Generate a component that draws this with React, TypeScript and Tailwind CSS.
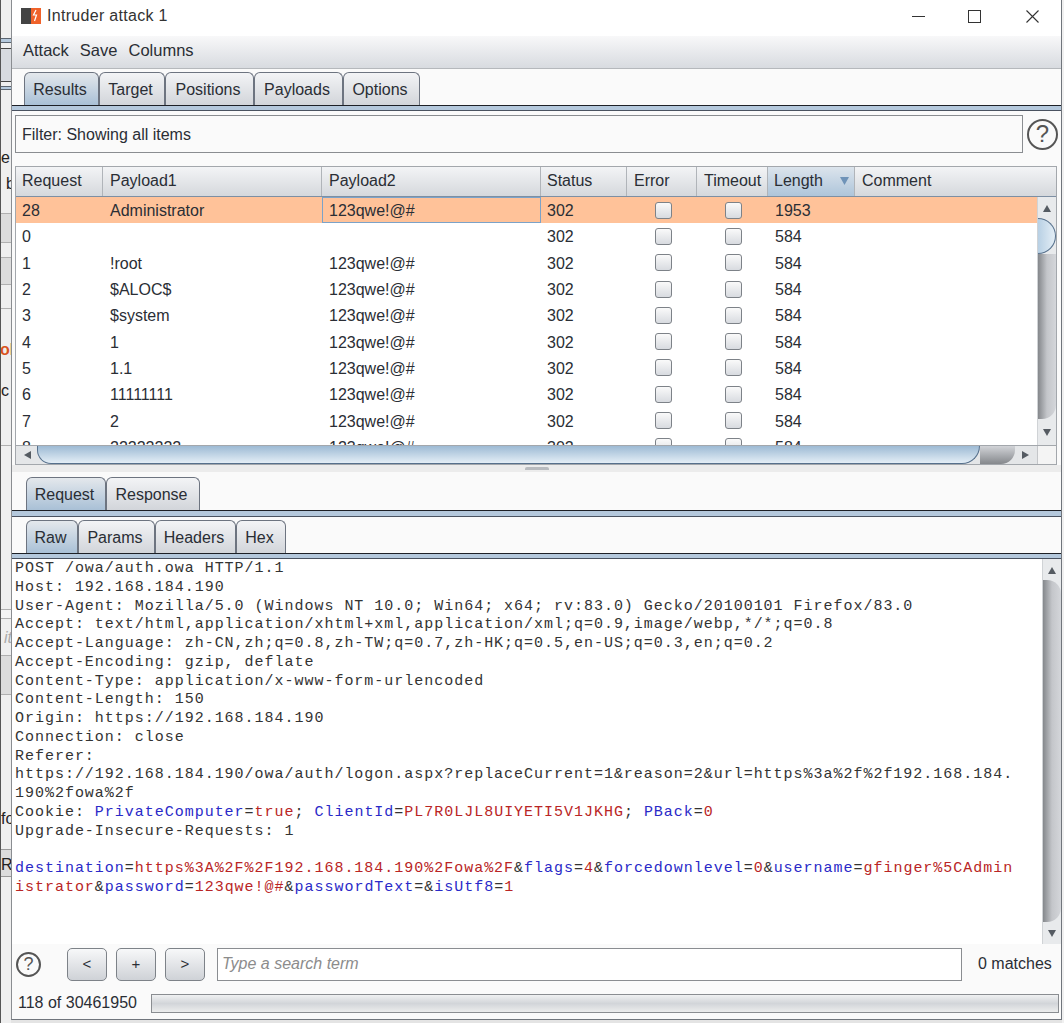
const requests = [
  { id: "0", p1: "", p2: "", len: "584" },
  { id: "1", p1: "!root", p2: "123qwe!@#", len: "584" },
  { id: "2", p1: "$ALOC$", p2: "123qwe!@#", len: "584" },
  { id: "3", p1: "$system", p2: "123qwe!@#", len: "584" },
  { id: "4", p1: "1", p2: "123qwe!@#", len: "584" },
  { id: "5", p1: "1.1", p2: "123qwe!@#", len: "584" },
  { id: "6", p1: "11111111", p2: "123qwe!@#", len: "584" },
  { id: "7", p1: "2", p2: "123qwe!@#", len: "584" },
  { id: "8", p1: "22222222", p2: "123qwe!@#", len: "584" },
];

const headers = [
  { label: "Request", cls: "w-[87px] pl-[6px]" },
  { label: "Payload1", cls: "w-[219px] pl-[7px]" },
  { label: "Payload2", cls: "w-[219px] pl-[7px]" },
  { label: "Status", cls: "w-[86px] pl-[6px]" },
  { label: "Error", cls: "w-[70px] pl-[7px]" },
  { label: "Timeout", cls: "w-[71px] pl-[7px]" },
];

function Tab({ label, width, active }: { label: string; width: string; active?: boolean }) {
  return (
    <div
      className={`flex items-center justify-center rounded-t-[6px] border border-b-0 border-[#6d7480] h-[33px] pt-[1px] pr-[3px] ${width} ${
        active ? "bg-gradient-to-b from-[#e4e8ec] to-[#a9c0d6]" : "bg-gradient-to-b from-[#f3f4f6] to-[#d2d5da]"
      }`}
    >
      {label}
    </div>
  );
}

function Check() {
  return <div className="w-[17px] h-[17px] rounded-[3px] border border-[#7d8288] bg-gradient-to-b from-[#fafafa] to-[#d8dbe0]" />;
}

function Row({ r, selected }: { r: { id: string; p1: string; p2: string; len: string }; selected?: boolean }) {
  return (
    <div className={`flex items-center h-[26.3px] shrink-0 ${selected ? "bg-[#ffc299]" : "bg-white"}`}>
      <div className="w-[87px] pl-[6px] pt-[2px]">{r.id}</div>
      <div className="w-[219px] pl-[7px] pt-[2px]">{r.p1}</div>
      <div className={`w-[219px] pl-[6px] pt-[2px] h-full flex items-center border ${selected ? "border-[#7ba2c8]" : "border-transparent"}`}>{r.p2}</div>
      <div className="w-[86px] pl-[6px] pt-[2px]">302</div>
      <div className="w-[70px] flex justify-center pl-[2px]"><Check /></div>
      <div className="w-[71px] flex justify-center pl-[2px]"><Check /></div>
      <div className="w-[87px] pl-[7px] pt-[2px]">{r.len}</div>
    </div>
  );
}

function ArrowBtn({ dir }: { dir: "up" | "down" | "left" | "right" }) {
  const pts = { up: "1,9 5,2 9,9", down: "1,2 5,9 9,2", left: "9,1 2,5 9,9", right: "1,1 8,5 1,9" }[dir];
  return (
    <svg width="10" height="10" viewBox="0 0 10 10" className="shrink-0">
      <polygon points={pts} fill="#555b62" />
    </svg>
  );
}

function SearchBtn({ label }: { label: string }) {
  return (
    <div className="flex items-center justify-center w-[40px] h-[33px] rounded-[5px] border border-[#7d8288] bg-gradient-to-b from-[#f7f8f9] to-[#cfd2d7] text-[15px] mr-[9px]">
      {label}
    </div>
  );
}

function Blue({ children }: { children: string }) {
  return <span className="text-[#2a2ac8]">{children}</span>;
}

function Red({ children }: { children: string }) {
  return <span className="text-[#b92525]">{children}</span>;
}

export default function App() {
  return (
    <div className="w-[1064px] h-[1023px] flex bg-[#e4e4e4] overflow-hidden font-['Liberation_Sans',sans-serif] text-[16px] text-[#2a2e35]">
      {/* what is left of the window underneath */}
      <div className="relative w-[11px] h-full shrink-0 bg-[#efefef] border-l border-[#555] overflow-hidden text-[#222]">
        <div className="absolute left-0 right-0 top-[38px] h-[5px] border-y border-[#5b6570] bg-[#b4c8dc]" />
        <div className="absolute left-0 right-0 top-[48px] h-[34px] border-y border-[#444] bg-[#d8dbe0]" />
        <div className="absolute left-0 right-0 top-[86px] h-[4px] border-y border-[#5b6570] bg-[#b4c8dc]" />
        <div className="absolute left-0 right-0 top-[213px] h-[30px] border-y border-[#b0b0b0] bg-[#dcdcdc]" />
        <div className="absolute left-0 right-0 top-[257px] h-[28px] border-y border-[#b0b0b0] bg-[#dcdcdc]" />
        <div className="absolute left-0 right-0 top-[308px] h-[1px] bg-[#b0b0b0]" />
        <div className="absolute left-0 right-0 top-[445px] h-[1px] bg-[#b0b0b0]" />
        <div className="absolute left-0 right-0 top-[609px] h-[10px] border-y border-[#b0b0b0] bg-[#f4f4f4]" />
        <div className="absolute left-0 right-0 top-[655px] h-[40px] border-y border-[#b0b0b0] bg-[#dcdcdc]" />
        <div className="absolute left-0 right-0 top-[849px] h-[28px] border-y border-[#999] bg-[#dcdcdc]" />
        <span className="absolute left-0 top-[146px]">e</span>
        <span className="absolute left-[5px] top-[172px]">b</span>
        <span className="absolute left-[-1px] top-[338px] font-bold text-[#d9541e]">ol</span>
        <span className="absolute left-0 top-[379px]">c</span>
        <span className="absolute left-[3px] top-[626px] italic text-[#aaa]">it</span>
        <span className="absolute left-0 top-[807px]">fo</span>
        <span className="absolute left-0 top-[853px]">R</span>
      </div>

      <div className="w-[1051px] h-[1020px] shrink-0 flex flex-col bg-[#fafafa] border-r border-b border-l border-l-[#8a8d91] border-[#70757c]">
        {/* title bar */}
        <div className="h-[36px] shrink-0 bg-white flex items-center pl-[9px] pb-[4px]">
          <svg width="20" height="16" viewBox="0 0 20 16" className="shrink-0">
            <rect x="0" y="0" width="10" height="16" fill="#444" />
            <rect x="10" y="0" width="10" height="16" fill="#f0622a" />
            <path d="M15 2 L12.5 7 H15.5 L13.5 13" stroke="#fff" strokeWidth="1.2" fill="none" />
          </svg>
          <span className="ml-[6px] text-[#333] tracking-[0.3px]">Intruder attack 1</span>
          <div className="ml-auto flex items-center pr-[22px]">
            <div className="w-[13px] h-[1px] bg-[#333]" />
            <div className="ml-[43px] w-[13px] h-[13px] border border-[#333]" />
            <svg width="13" height="13" viewBox="0 0 13 13" className="ml-[45px]">
              <path d="M0.5 0.5 L12.5 12.5 M12.5 0.5 L0.5 12.5" stroke="#333" strokeWidth="1.1" />
            </svg>
          </div>
        </div>

        {/* menu */}
        <div className="h-[33px] shrink-0 flex items-center gap-[11px] pl-[11px] pb-[4px] bg-gradient-to-b from-[#f8f8f9] to-[#d8dbe0] border-b border-[#b5b8bc] text-[16.5px]">
          <span>Attack</span>
          <span>Save</span>
          <span>Columns</span>
        </div>

        {/* main tabs */}
        <div className="h-[37px] shrink-0 flex items-end pl-[12px] border-b border-[#1d2026]">
          <Tab label="Results" width="w-[75px]" active />
          <Tab label="Target" width="w-[66px]" />
          <Tab label="Positions" width="w-[89px]" />
          <Tab label="Payloads" width="w-[89px]" />
          <Tab label="Options" width="w-[77px]" />
        </div>
        <div className="h-[5px] shrink-0 bg-[#b4c8dc] border-b border-[#4a5260]" />

        {/* filter */}
        <div className="h-[38px] mt-[4px] shrink-0 flex items-center pl-[3px]">
          <div className="w-[1008px] h-full flex items-center pl-[6px] pt-[2px] border border-[#8a8d91] bg-[#fafafa]">Filter: Showing all items</div>
          <div className="ml-[4px] w-[31px] h-[31px] rounded-full border-2 border-[#555] flex items-center justify-center text-[24px] text-[#555]">?</div>
        </div>

        {/* results table */}
        <div className="mt-[13px] ml-[3px] w-[1042px] h-[299px] shrink-0 flex flex-col border border-[#a3a7ac] overflow-hidden">
          <div className="h-[30px] shrink-0 flex border-b border-[#7d8fa3] bg-gradient-to-b from-[#f3f4f6] to-[#d5d8dc]">
            {headers.map((h) => (
              <div key={h.label} className={`${h.cls} flex items-center pb-[2px] border-r border-[#b0b4b9]`}>{h.label}</div>
            ))}
            <div className="w-[87px] flex items-center justify-between pl-[6px] pr-[5px] pb-[2px] border-r border-[#b0b4b9] bg-gradient-to-b from-[#dce4ec] to-[#aec5da]">
              Length
              <svg width="9" height="8" viewBox="0 0 9 8"><polygon points="0,0 9,0 4.5,8" fill="#6f93b8" /></svg>
            </div>
            <div className="flex-1 flex items-center pl-[7px] pb-[2px]">Comment</div>
          </div>
          <div className="flex-1 flex min-h-0">
            <div className="flex-1 flex flex-col overflow-hidden">
              <Row r={{ id: "28", p1: "Administrator", p2: "123qwe!@#", len: "1953" }} selected />
              {requests.map((r) => (
                <Row key={r.id} r={r} />
              ))}
            </div>
            <div className="w-[19px] shrink-0 flex flex-col items-center bg-[#e8eaec] border-l border-[#d0d3d6]">
              <div className="h-[21px] shrink-0 flex items-center"><ArrowBtn dir="up" /></div>
              <div className="w-full h-[36px] shrink-0 rounded-r-[18px] border-r border-y border-[#56708c] bg-gradient-to-r from-[#b8d0e4] to-[#e4eef6]" />
              <div className="w-full flex-1 rounded-br-[14px] bg-gradient-to-r from-[#85888c] via-[#c4c6ca] to-[#d4d6da]" />
              <div className="h-[26px] shrink-0 flex items-center"><ArrowBtn dir="down" /></div>
            </div>
          </div>
          <div className="h-[19px] shrink-0 flex items-center bg-[#e4e6e8] border-t border-[#a3a7ac]">
            <div className="w-[21px] flex justify-center shrink-0"><ArrowBtn dir="left" /></div>
            <div className="w-[943px] h-full rounded-bl-[14px] rounded-br-[18px] border-b border-x border-[#56708c] bg-gradient-to-b from-[#9dbad4] to-[#e4eef6] shrink-0" />
            <div className="w-[35px] h-full rounded-br-[14px] bg-gradient-to-b from-[#d2d4d8] to-[#85888c] shrink-0" />
            <div className="w-[22px] flex justify-center shrink-0"><ArrowBtn dir="right" /></div>
            <div className="flex-1 h-full bg-[#f4f4f4] border-l border-[#c4c6c9]" />
          </div>
        </div>

        {/* divider */}
        <div className="h-[7px] shrink-0 flex justify-center items-center bg-[#ececec]">
          <div className="w-[24px] h-[3px] rounded-t-[2px] bg-[#b8bbbf]" />
        </div>

        {/* request / response tabs */}
        <div className="h-[39px] shrink-0 flex items-end pl-[14px] border-b border-[#1d2026]">
          <Tab label="Request" width="w-[80px]" active />
          <Tab label="Response" width="w-[94px]" />
        </div>
        <div className="h-[6px] shrink-0 bg-[#b4c8dc] border-b border-[#4a5260]" />

        <div className="h-[37px] shrink-0 flex items-end pl-[14px] border-b border-[#1d2026]">
          <Tab label="Raw" width="w-[52px]" active />
          <Tab label="Params" width="w-[77px]" />
          <Tab label="Headers" width="w-[81px]" />
          <Tab label="Hex" width="w-[50px]" />
        </div>
        <div className="h-[5px] shrink-0 bg-[#b4c8dc] border-b border-[#4a5260]" />

        {/* message editor */}
        <div className="h-[385px] shrink-0 flex bg-white">
          <div className="flex-1 pl-[3px] pt-[1px] whitespace-pre font-['Liberation_Mono',monospace] text-[15px] tracking-[0.98px] leading-[18.75px] text-[#333]">
            <div>POST /owa/auth.owa HTTP/1.1</div>
            <div>Host: 192.168.184.190</div>
            <div>User-Agent: Mozilla/5.0 (Windows NT 10.0; Win64; x64; rv:83.0) Gecko/20100101 Firefox/83.0</div>
            <div>Accept: text/html,application/xhtml+xml,application/xml;q=0.9,image/webp,*/*;q=0.8</div>
            <div>Accept-Language: zh-CN,zh;q=0.8,zh-TW;q=0.7,zh-HK;q=0.5,en-US;q=0.3,en;q=0.2</div>
            <div>Accept-Encoding: gzip, deflate</div>
            <div>Content-Type: application/x-www-form-urlencoded</div>
            <div>Content-Length: 150</div>
            <div>Origin: https://192.168.184.190</div>
            <div>Connection: close</div>
            <div>Referer:</div>
            <div>https://192.168.184.190/owa/auth/logon.aspx?replaceCurrent=1&amp;reason=2&amp;url=https%3a%2f%2f192.168.184.</div>
            <div>190%2fowa%2f</div>
            <div>
              Cookie: <Blue>PrivateComputer</Blue>=<Red>true</Red>; <Blue>ClientId</Blue>=<Red>PL7R0LJL8UIYETI5V1JKHG</Red>; <Blue>PBack</Blue>=<Red>0</Red>
            </div>
            <div>Upgrade-Insecure-Requests: 1</div>
            <div>&nbsp;</div>
            <div>
              <Blue>destination</Blue>=<Red>https%3A%2F%2F192.168.184.190%2Fowa%2F</Red>&amp;<Blue>flags</Blue>=<Red>4</Red>&amp;<Blue>forcedownlevel</Blue>=<Red>0</Red>&amp;<Blue>username</Blue>=<Red>gfinger%5CAdmin</Red>
            </div>
            <div>
              <Red>istrator</Red>&amp;<Blue>password</Blue>=<Red>123qwe!@#</Red>&amp;<Blue>passwordText</Blue>=&amp;<Blue>isUtf8</Blue>=<Red>1</Red>
            </div>
          </div>
          <div className="w-[19px] shrink-0 flex flex-col items-center bg-[#e8eaec] border-l border-[#d0d3d6]">
            <div className="h-[21px] shrink-0 flex items-center"><ArrowBtn dir="up" /></div>
            <div className="w-full flex-1 rounded-tr-[14px] rounded-br-[14px] bg-gradient-to-r from-[#85888c] via-[#c4c6ca] to-[#d4d6da]" />
            <div className="h-[22px] shrink-0 flex items-center"><ArrowBtn dir="down" /></div>
          </div>
        </div>

        {/* search */}
        <div className="h-[40px] shrink-0 flex items-center pl-[4px]">
          <div className="w-[25px] h-[25px] rounded-full border-2 border-[#555] flex items-center justify-center text-[18px] text-[#555]">?</div>
          <div className="ml-[26px] flex"><SearchBtn label="<" /><SearchBtn label="+" /><SearchBtn label=">" /></div>
          <div className="ml-[3px] w-[745px] h-[33px] flex items-center pl-[4px] border border-[#8a8d91] bg-white italic text-[#8c8c8c]">Type a search term</div>
          <div className="ml-[16px]">0 matches</div>
        </div>

        {/* progress */}
        <div className="flex-1 flex items-center pl-[6px] pr-[2px] pt-[3px]">
          <span className="w-[133px] shrink-0">118 of 30461950</span>
          <div className="flex-1 h-[19px] border border-[#8a8d91] bg-gradient-to-b from-[#f0f1f2] via-[#d2d5d9] to-[#eceded]" />
        </div>
      </div>

      <div className="flex-1 bg-[#f0f0f0]" />
    </div>
  );
}
